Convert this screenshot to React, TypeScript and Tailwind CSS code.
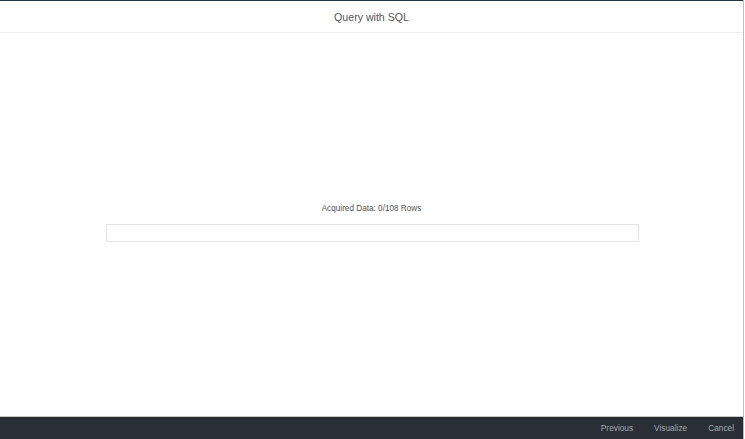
import React from 'react';

const App: React.FC = () => {
  return (
    <div className="flex h-[439px] w-[745px] bg-white" style={{ fontFamily: '"Liberation Sans", Arial, sans-serif' }}>
      <div className="flex w-[743px] flex-col border-t border-[#263445]">
        <header className="flex h-[32px] shrink-0 items-center justify-center border-b border-[#eeeeee]">
          <h1 className="pt-[2px] text-[10.6px] text-[#555555]">Query with SQL</h1>
        </header>

        <main className="flex flex-1 flex-col items-center pt-[171px]">
          <p className="text-[8.2px] leading-[10px] text-[#555555]">Acquired Data: 0/108 Rows</p>
          <div className="ml-[1px] mt-[10px] h-[18px] w-[533px] border border-[#e3e3e3] bg-white" />
        </main>

        <footer className="flex h-[23px] shrink-0 items-center justify-end gap-[21px] border-t border-[#c8c8c8] bg-[#2a2f37] pr-[9px]">
          <button className="pt-[1px] text-[8.3px] font-medium text-[#a3a8af]">Previous</button>
          <button className="pt-[1px] text-[8.3px] font-medium text-[#a3a8af]">Visualize</button>
          <button className="pt-[1px] text-[8.3px] font-medium text-[#a3a8af]">Cancel</button>
        </footer>
      </div>
      <div className="w-px bg-[#bdbdbd]" />
      <div className="w-px bg-white" />
    </div>
  );
};

export default App;
